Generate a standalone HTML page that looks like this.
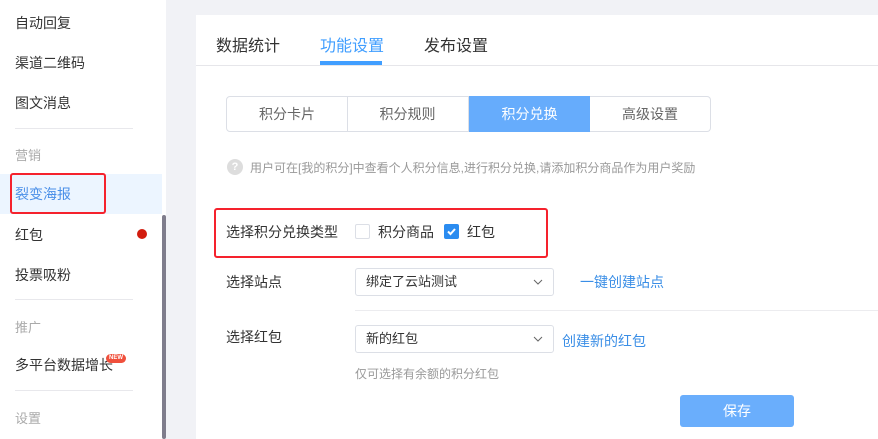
<!DOCTYPE html>
<html><head><meta charset="utf-8"><style>
*{margin:0;padding:0;box-sizing:border-box}
body{width:878px;height:439px;overflow:hidden;background:#f1f2f6;font-family:"Liberation Sans","Noto Sans CJK SC",sans-serif;position:relative}
.a{position:absolute;white-space:nowrap}
.side{position:absolute;left:0;top:0;width:166px;height:439px;background:#fff}
.mi{position:absolute;left:15px;font-size:14px;color:#333}
.gh{position:absolute;left:15px;font-size:13px;color:#aaa}
.sep{position:absolute;left:15px;width:118px;height:1px;background:#e8e8ec}
.panel{position:absolute;left:196px;top:15px;width:682px;height:424px;background:#fff}
.seg{position:absolute;top:96px;height:36px;border:1px solid #dcdfe6;font-size:14px;color:#666;text-align:center;line-height:34px}
.sel{position:absolute;height:28px;border:1px solid #dcdfe6;border-radius:3px;font-size:13px;color:#333;line-height:26px;padding-left:10px}
.lbl{position:absolute;font-size:14px;color:#333}
.link{position:absolute;font-size:14px;color:#3a8ee6}
</style></head><body>
<div class="side">
<div class="mi" style="top:13px">自动回复</div>
<div class="mi" style="top:53px">渠道二维码</div>
<div class="mi" style="top:93px">图文消息</div>
<div class="sep" style="top:128px"></div>
<div class="gh" style="top:145px">营销</div>
<div class="a" style="left:0;top:174px;width:162px;height:40px;background:#ecf5ff"></div>
<div class="mi" style="top:184px;color:#4a8fe8">裂变海报</div>
<div class="a" style="left:10px;top:173px;width:96px;height:41px;border:2px solid #f5222d;border-radius:3px"></div>
<div class="mi" style="top:225px">红包</div>
<div class="a" style="left:137px;top:229px;width:10px;height:10px;border-radius:50%;background:#d21c0e"></div>
<div class="mi" style="top:265px">投票吸粉</div>
<div class="sep" style="top:299px"></div>
<div class="gh" style="top:317px">推广</div>
<div class="mi" style="top:355px">多平台数据增长</div>
<div class="a" style="left:106px;top:354px;width:20px;height:9px;background:#f0503c;border-radius:5px;color:#fff;font-size:6px;line-height:9px;text-align:center;font-weight:bold">NEW</div>
<div class="sep" style="top:390px"></div>
<div class="gh" style="top:408px">设置</div>
<div class="a" style="left:162px;top:215px;width:4px;height:224px;background:#7f7d8c;border-radius:2px"></div>
</div>
<div class="panel"></div>
<div class="a" style="left:196px;top:65px;width:682px;height:1px;background:#e6e6ea"></div>
<div class="a" style="left:216px;top:32px;font-size:16px;color:#333">数据统计</div>
<div class="a" style="left:320px;top:32px;font-size:16px;color:#409eff">功能设置</div>
<div class="a" style="left:320px;top:61px;width:62px;height:4px;background:#409eff"></div>
<div class="a" style="left:424px;top:32px;font-size:16px;color:#333">发布设置</div>
<div class="seg" style="left:226px;width:122px;border-radius:4px 0 0 4px">积分卡片</div>
<div class="seg" style="left:347px;width:122px;border-left:none">积分规则</div>
<div class="seg" style="left:469px;width:121px;background:#66acfc;border-color:#66acfc;color:#fff">积分兑换</div>
<div class="seg" style="left:590px;width:121px;border-left:none;border-radius:0 4px 4px 0">高级设置</div>
<div class="a" style="left:227px;top:159px;width:16px;height:16px;border-radius:50%;background:#ddd;color:#fff;font-size:11px;text-align:center;line-height:16px;font-weight:bold">?</div>
<div class="a" style="left:250px;top:159px;font-size:12px;color:#999">用户可在[我的积分]中查看个人积分信息,进行积分兑换,请添加积分商品作为用户奖励</div>
<div class="a" style="left:214px;top:208px;width:334px;height:50px;border:2px solid #f5222d;border-radius:3px"></div>
<div class="lbl" style="left:226px;top:222px">选择积分兑换类型</div>
<div class="a" style="left:355px;top:224px;width:15px;height:15px;border:1px solid #dcdfe6;border-radius:2px"></div>
<div class="lbl" style="left:378px;top:222px">积分商品</div>
<div class="a" style="left:444px;top:224px;width:15px;height:15px;background:#2b8cf0;border-radius:2px"><svg width="15" height="15"><path d="M4 7.5l2.5 2.5 4.5-5" stroke="#fff" stroke-width="2" fill="none"/></svg></div>
<div class="lbl" style="left:467px;top:222px">红包</div>
<div class="lbl" style="left:226px;top:272px">选择站点</div>
<div class="sel" style="left:355px;top:268px;width:199px">绑定了云站测试<svg class="a" style="right:10px;top:10px" width="10" height="6"><path d="M1 1l4 4 4-4" stroke="#666" fill="none"/></svg></div>
<div class="link" style="left:580px;top:272px">一键创建站点</div>
<div class="a" style="left:355px;top:310px;width:523px;height:1px;background:#ececef"></div>
<div class="lbl" style="left:226px;top:327px">选择红包</div>
<div class="sel" style="left:355px;top:325px;width:199px">新的红包<svg class="a" style="right:10px;top:10px" width="10" height="6"><path d="M1 1l4 4 4-4" stroke="#666" fill="none"/></svg></div>
<div class="link" style="left:562px;top:331px">创建新的红包</div>
<div class="a" style="left:355px;top:365px;font-size:12px;color:#999">仅可选择有余额的积分红包</div>
<div class="a" style="left:680px;top:395px;width:114px;height:32px;background:#6aaefc;border-radius:3px;color:#fff;font-size:14px;text-align:center;line-height:32px">保存</div>
</body></html>
